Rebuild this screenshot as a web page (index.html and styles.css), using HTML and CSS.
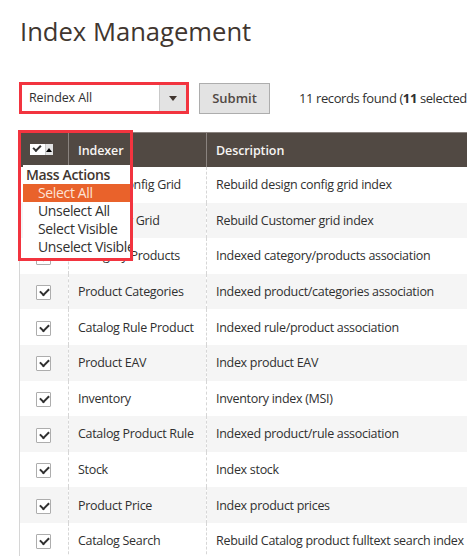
FILE: index.html
```html
<!DOCTYPE html>
<html lang="en">
<head>
    <meta charset="UTF-8">
    <title>Index Management</title>
    <link rel="stylesheet" href="styles.css">
</head>
<body>
    <h1 class="page-title">Index Management</h1>

    <div class="toolbar">
        <div class="mark">
            <div class="action-select">
                <span class="value">Reindex All</span>
                <span class="arrow"></span>
            </div>
        </div>
        <button class="btn-submit" type="button">Submit</button>
        <div class="records">11 records found (<b>11</b> selected)</div>
    </div>

    <div class="grid-wrap">
        <table class="grid">
            <colgroup>
                <col class="c1">
                <col class="c2">
                <col class="c3">
            </colgroup>
            <thead>
                <tr>
                    <th class="col-check">
                        <div class="mass-select">
                            <span class="tick"></span>
                            <span class="up"></span>
                        </div>
                    </th>
                    <th>Indexer</th>
                    <th>Description</th>
                </tr>
            </thead>
            <tbody>
                <tr><td class="col-check"><span class="cb"></span></td><td>Design Config Grid</td><td>Rebuild design config grid index</td></tr>
                <tr><td class="col-check"><span class="cb"></span></td><td>Customer Grid</td><td>Rebuild Customer grid index</td></tr>
                <tr><td class="col-check"><span class="cb"></span></td><td>Category Products</td><td>Indexed category/products association</td></tr>
                <tr><td class="col-check"><span class="cb"></span></td><td>Product Categories</td><td>Indexed product/categories association</td></tr>
                <tr><td class="col-check"><span class="cb"></span></td><td>Catalog Rule Product</td><td>Indexed rule/product association</td></tr>
                <tr><td class="col-check"><span class="cb"></span></td><td>Product EAV</td><td>Index product EAV</td></tr>
                <tr><td class="col-check"><span class="cb"></span></td><td>Inventory</td><td>Inventory index (MSI)</td></tr>
                <tr><td class="col-check"><span class="cb"></span></td><td>Catalog Product Rule</td><td>Indexed product/rule association</td></tr>
                <tr><td class="col-check"><span class="cb"></span></td><td>Stock</td><td>Index stock</td></tr>
                <tr><td class="col-check"><span class="cb"></span></td><td>Product Price</td><td>Index product prices</td></tr>
                <tr><td class="col-check"><span class="cb"></span></td><td>Catalog Search</td><td>Rebuild Catalog product fulltext search index</td></tr>
            </tbody>
        </table>

        <!-- mass actions menu, opened over the grid -->
        <div class="mass-note">
            <div class="mass-head"></div>
            <ul class="mass-menu">
                <li class="title">Mass Actions</li>
                <li class="active">Select All</li>
                <li>Unselect All</li>
                <li>Select Visible</li>
                <li>Unselect Visible</li>
            </ul>
        </div>
    </div>
</body>
</html>
```

FILE: styles.css
```css
html {
    background: #ffffff;
}

body {
    margin: 0;
    padding: 0 0 0 19px;
    width: 448px;
    height: 556px;
    overflow: hidden;
    font-family: "Open Sans", "Liberation Sans", sans-serif;
    color: #303030;
}

h1.page-title {
    margin: 16px 0 0 1px;
    font-size: 25.6px;
    line-height: 32px;
    font-weight: 400;
    color: #41362f;
    white-space: nowrap;
}

div.toolbar {
    display: flex;
    align-items: center;
    margin-top: 34px;
    height: 32px;
    white-space: nowrap;
}

div.mark {
    flex: none;
    border: 3px solid #f2343f;
    width: 164px;
    height: 26px;
}

div.action-select {
    display: flex;
    height: 26px;
    background: #fff;
    font-size: 12.5px;
    letter-spacing: -0.1px;
}

div.action-select .value {
    flex: 1;
    line-height: 26px;
    padding-left: 7px;
    color: #303030;
}

div.action-select .arrow {
    width: 26px;
    background: #e3e3e3;
    border-left: 1px solid #c9c9c9;
    position: relative;
}

div.action-select .arrow::after {
    content: "";
    position: absolute;
    left: 9px;
    top: 11px;
    border-left: 4px solid transparent;
    border-right: 4px solid transparent;
    border-top: 5px solid #41362f;
}

button.btn-submit {
    flex: none;
    margin-left: 10px;
    width: 71px;
    height: 31px;
    background: #e3e3e3;
    border: 1px solid #adadad;
    font-family: inherit;
    font-size: 13px;
    font-weight: 600;
    color: #514943;
    padding: 0;
}

div.records {
    flex: none;
    margin-left: 29px;
    font-size: 13px;
    letter-spacing: -0.4px;
    color: #303030;
}

div.grid-wrap {
    position: relative;
    margin-top: 18px;
}

table.grid {
    border-collapse: collapse;
    width: 520px;
    table-layout: fixed;
    font-size: 12.5px;
    letter-spacing: -0.3px;
    border-left: 1px solid #d6d6d6;
}

col.c1 {
    width: 49px;
}

col.c2 {
    width: 138px;
}

table.grid th {
    background: #514943;
    color: #f7f5f3;
    font-weight: 600;
    font-size: 12.5px;
    letter-spacing: -0.1px;
    text-align: left;
    height: 34px;
    padding: 0 0 0 9px;
    border-left: 1px solid #8a837f;
    border-top: 1px solid #8a837f;
}

table.grid th.col-check {
    border-left: none;
    padding: 0 0 0 10px;
}

table.grid td {
    height: 35.6px;
    padding: 0 0 0 9px;
    border-left: 1px dashed #d6d6d6;
    white-space: nowrap;
    overflow: hidden;
}

table.grid td.col-check {
    border-left: none;
    padding: 0 2px 0 0;
    text-align: center;
}

table.grid tbody tr:nth-child(even) td {
    background: #f5f5f5;
}

span.cb {
    display: inline-block;
    width: 13px;
    height: 13px;
    border: 1px solid #adadad;
    border-radius: 1px;
    background: #fff;
    position: relative;
    vertical-align: middle;
}

span.cb::after,
span.tick::after {
    content: "";
    position: absolute;
    left: 3px;
    top: 2px;
    width: 7px;
    height: 4px;
    border-left: 2px solid #303030;
    border-bottom: 2px solid #303030;
    transform: rotate(-45deg);
}

div.mass-select {
    display: flex;
    width: 23px;
    height: 11px;
    margin-top: -2px;
    background: #fff;
}

div.mass-select .tick {
    position: relative;
    width: 15px;
    height: 11px;
}

div.mass-select .tick::after {
    left: 3px;
    top: 1px;
    width: 6px;
    height: 3px;
}

div.mass-select .up {
    flex: 1;
    background: #e3e3e3;
    border-left: 1px solid #c9c9c9;
    position: relative;
}

div.mass-select .up::after {
    content: "";
    position: absolute;
    left: 0;
    top: 4px;
    border-left: 3.5px solid transparent;
    border-right: 3.5px solid transparent;
    border-bottom: 4px solid #000;
}

div.mass-note {
    position: absolute;
    left: -1px;
    top: -2px;
    width: 109px;
    height: 125px;
    border: 3px solid #f2343f;
    display: flex;
    flex-direction: column;
    overflow: hidden;
}

div.mass-head {
    height: 32px;
    flex: none;
}

ul.mass-menu {
    list-style: none;
    margin: 0 0 0 2px;
    padding: 0;
    flex: 1;
    background: #fff;
    font-size: 14px;
    letter-spacing: -0.35px;
    line-height: 18px;
    color: #303030;
    white-space: nowrap;
}

ul.mass-menu li {
    padding-left: 15px;
}

ul.mass-menu li.title {
    padding: 1px 0 0 3px;
    font-weight: 600;
    color: #41362f;
}

ul.mass-menu li.active {
    background: #e9622b;
    color: #fde3d6;
}
```
